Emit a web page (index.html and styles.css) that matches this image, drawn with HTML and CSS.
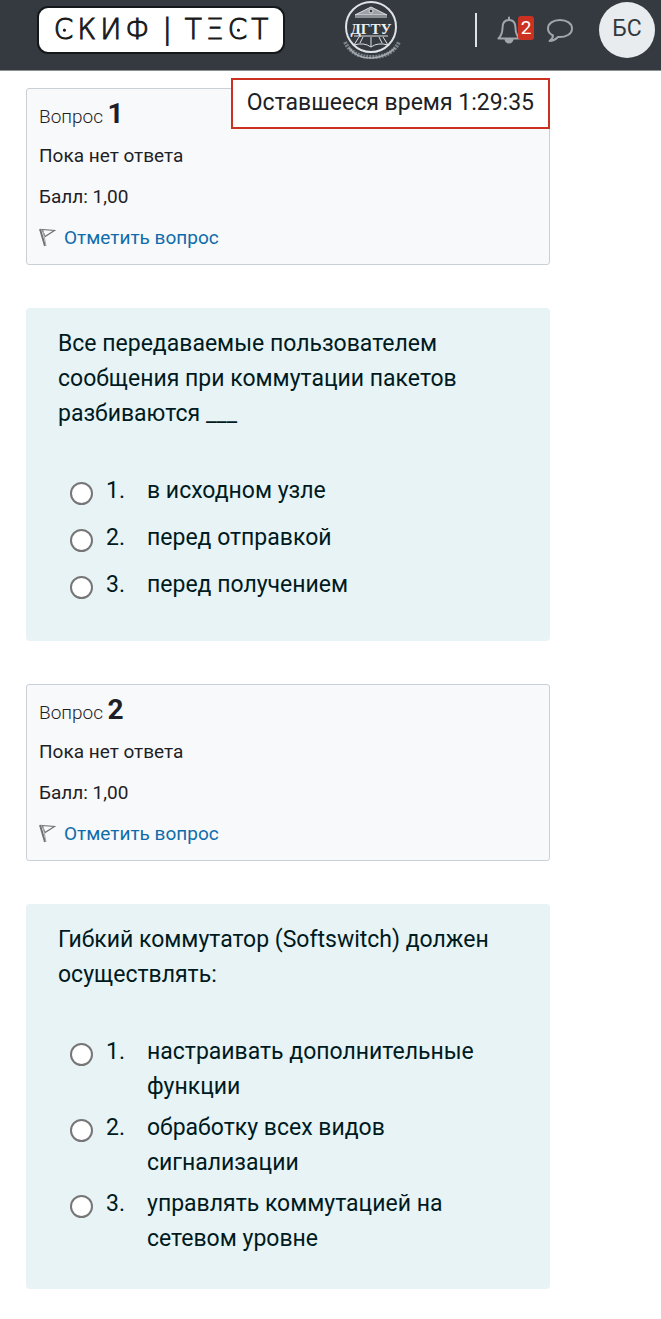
FILE: index.html
```html
<!DOCTYPE html>
<html lang="ru">
<head>
<meta charset="utf-8">
<meta name="viewport" content="width=device-width, initial-scale=1">
<title>СКИФ | ТЕСТ</title>
<link rel="stylesheet" href="styles.css">
</head>
<body>
<header class="topbar">
  <a class="brand" href="#" aria-label="СКИФ | ТЕСТ">
    <span class="dotted">С</span><span>К</span><span>И</span><span>Ф</span>
    <span class="brand-bar">|</span>
    <span>Т</span><span>Ξ</span><span class="dotted">С</span><span>Т</span>
  </a>
  <a class="emblem" href="#" aria-label="ДГТУ">
    <svg width="60" height="62" viewBox="0 0 60 62" fill="none" stroke="#dfe2e6">
      <path d="M3 42Q10 57 30 57T57 42" stroke="#7d848b" stroke-width="4" stroke-dasharray="2 1"/>
      <path d="M7 48Q16 59 30 58T53 48" stroke="#a6acb2" stroke-width="1.5"/>
      <circle cx="29" cy="27" r="25" fill="#343a40" stroke-width="2"/>
      <path d="M13 15L29 7L45 15Z" fill="#9ba1a7" stroke-width="1"/>
      <circle cx="29" cy="11" r="2" fill="#343a40" stroke-width="1"/>
      <path d="M13 17H45M12 36H46" stroke-width="1"/>
      <path d="M17 37L12 45Q22 42 29 47Q36 42 46 45L41 37M29 37V47M21 37L18 43M37 37L40 43" stroke-width="1"/>
      <text x="29" y="34" text-anchor="middle" class="emblem-text">ДГТУ</text>
    </svg>
  </a>
  <div class="tools">
    <span class="divider"></span>
    <button class="tool" type="button" aria-label="Уведомления">
      <svg width="24" height="28" viewBox="0 0 24 28" fill="none" stroke="#a1a6ab" stroke-width="2" stroke-linejoin="round">
        <path d="M12 4C7 4 5.5 8 5.5 12C5.5 18 4 20 1.500 22.500H22.500C20 20 18.500 18 18.500 12C18.500 8 17 4 12 4Z"/>
        <path d="M12 4V1.500" stroke-linecap="round"/>
        <path d="M8.500 23A3.500 3.500 0 0 0 15.500 23Z" fill="#a1a6ab"/>
      </svg>
      <span class="badge">2</span>
    </button>
    <button class="tool" type="button" aria-label="Сообщения">
      <svg width="28" height="26" viewBox="0 0 28 26" fill="none" stroke="#a1a6ab" stroke-width="2" stroke-linejoin="round">
        <path d="M14 3C7 3 2 6.500 2 11.500C2 14.500 4 17 7 18.500C7 20.500 5.500 22.500 3.500 24C7.500 24 10 22 12 20C20 20.500 26 17 26 11.500C26 6.500 21 3 14 3Z"/>
      </svg>
    </button>
    <button class="avatar" type="button">БС</button>
  </div>
</header>
<main class="quiz">
  <div class="timer" role="timer">Оставшееся время 1:29:35</div>
  <section class="question">
    <div class="info">
      <h3 class="number">Вопрос <b>1</b></h3>
      <div>Пока нет ответа</div>
      <div>Балл: 1,00</div>
      <a class="flag" href="#"><svg width="17" height="19" viewBox="0 0 17 19" fill="none" stroke="#6f7377"><path d="M1 1L6 18" stroke-width="2"/><path d="M3 1.500L15.500 2.500L6 8.500Z" stroke-width="1.200"/><path d="M4 2L7 18" stroke="#aaa"/></svg>Отметить вопрос</a>
    </div>
    <form class="body">
      <p class="prompt">Все передаваемые пользователем сообщения при коммутации пакетов разбиваются ___</p>
      <div class="answers">
        <label class="answer"><input type="radio" name="q1"><span class="num">1.</span><span>в исходном узле</span></label>
        <label class="answer"><input type="radio" name="q1"><span class="num">2.</span><span>перед отправкой</span></label>
        <label class="answer"><input type="radio" name="q1"><span class="num">3.</span><span>перед получением</span></label>
      </div>
    </form>
  </section>
  <section class="question">
    <div class="info">
      <h3 class="number">Вопрос <b>2</b></h3>
      <div>Пока нет ответа</div>
      <div>Балл: 1,00</div>
      <a class="flag" href="#"><svg width="17" height="19" viewBox="0 0 17 19" fill="none" stroke="#6f7377"><path d="M1 1L6 18" stroke-width="2"/><path d="M3 1.500L15.500 2.500L6 8.500Z" stroke-width="1.200"/><path d="M4 2L7 18" stroke="#aaa"/></svg>Отметить вопрос</a>
    </div>
    <form class="body">
      <p class="prompt">Гибкий коммутатор (Softswitch) должен осуществлять:</p>
      <div class="answers">
        <label class="answer"><input type="radio" name="q2"><span class="num">1.</span><span>настраивать дополнительные функции</span></label>
        <label class="answer"><input type="radio" name="q2"><span class="num">2.</span><span>обработку всех видов сигнализации</span></label>
        <label class="answer"><input type="radio" name="q2"><span class="num">3.</span><span>управлять коммутацией на сетевом уровне</span></label>
      </div>
    </form>
  </section>
</main>
</body>
</html>
```
FILE: styles.css
```css
* {
  box-sizing: border-box;
}

body {
  margin: 0;
  background: #fff;
  color: #1d2125;
  font-family: Roboto, "Noto Sans", sans-serif;
  font-size: 23px;
  line-height: 35px;
}

button {
  padding: 0;
  border: 0;
  font-family: inherit;
  cursor: pointer;
}

.topbar {
  display: flex;
  align-items: flex-start;
  height: 71px;
  padding: 0 6px 0 37px;
  background: #343a40;
  border-bottom: 1px solid #8b9294;
}

.brand {
  display: flex;
  align-items: center;
  justify-content: center;
  gap: 4px;
  width: 248px;
  height: 48px;
  margin-top: 6px;
  padding-bottom: 2px;
  border: 2px solid #15181a;
  border-radius: 11px;
  background: #fff;
  color: #1a1a1a;
  font-family: "DejaVu Sans", sans-serif;
  font-size: 28px;
  font-weight: 200;
  text-decoration: none;
  -webkit-text-stroke: 1px #1a1a1a;
}

.brand-bar {
  padding: 0 9px;
}

.dotted {
  background: radial-gradient(circle at 55% 52%, #1a1a1a 1px, transparent 2px);
}

.emblem {
  width: 60px;
  height: 62px;
  margin-left: 57px;
}

.emblem-text {
  fill: #eef0f2;
  stroke: none;
  font-family: "Liberation Sans Narrow", "Liberation Serif", serif;
  font-size: 15px;
  font-weight: bold;
}

.tools {
  display: flex;
  align-items: center;
  height: 60px;
  margin-left: auto;
}

.divider {
  width: 2px;
  height: 34px;
  margin-right: 20px;
  background: #dee2e6;
}

.tool {
  position: relative;
  display: flex;
  margin-right: 25px;
  background: none;
}

.badge {
  position: absolute;
  top: 0;
  left: 21px;
  width: 16px;
  height: 24px;
  border-radius: 3px;
  background: #ca3120;
  color: #fff;
  font-size: 19px;
  line-height: 23px;
}

.avatar {
  width: 56px;
  height: 56px;
  padding-bottom: 3px;
  border-radius: 50%;
  background: #e9ecef;
  color: #343a40;
  font-size: 23px;
}

.quiz {
  position: relative;
  display: flex;
  flex-direction: column;
  gap: 43px;
  margin: 17px 111px 28px 26px;
}

.timer {
  position: absolute;
  top: -10px;
  right: 0;
  padding: 5px 14px 7px;
  border: 2px solid #ca3120;
  background: #fff;
}

.question {
  display: flex;
  flex-direction: column;
  gap: 43px;
}

.info {
  display: flex;
  flex-direction: column;
  gap: 14px;
  padding: 14px 12px 13px;
  border: 1px solid #cad0d7;
  border-radius: 3px;
  background: #f8f9fa;
  font-size: 19px;
  line-height: 27px;
}

.number {
  margin: 0;
  font-size: 19px;
  font-weight: 300;
  line-height: 22px;
}

.number b {
  font-size: 28px;
  font-weight: 700;
}

.flag {
  display: flex;
  align-items: center;
  gap: 8px;
  color: #0f6cab;
  text-decoration: none;
}

.body {
  padding: 18px 32px 30px;
  border-radius: 4px;
  background: #e7f3f5;
  color: #001a1e;
}

.prompt {
  margin: 0 0 39px;
}

.answers {
  display: flex;
  flex-direction: column;
}

.answer {
  display: flex;
  align-items: flex-start;
  min-height: 47px;
  padding: 3px 0;
}

.answer input {
  flex: none;
  appearance: none;
  width: 23px;
  height: 23px;
  margin: 9px 13px 0 12px;
  border: 2px solid #767676;
  border-radius: 50%;
  background: #fff;
}

.num {
  flex: none;
  width: 41px;
}
```
